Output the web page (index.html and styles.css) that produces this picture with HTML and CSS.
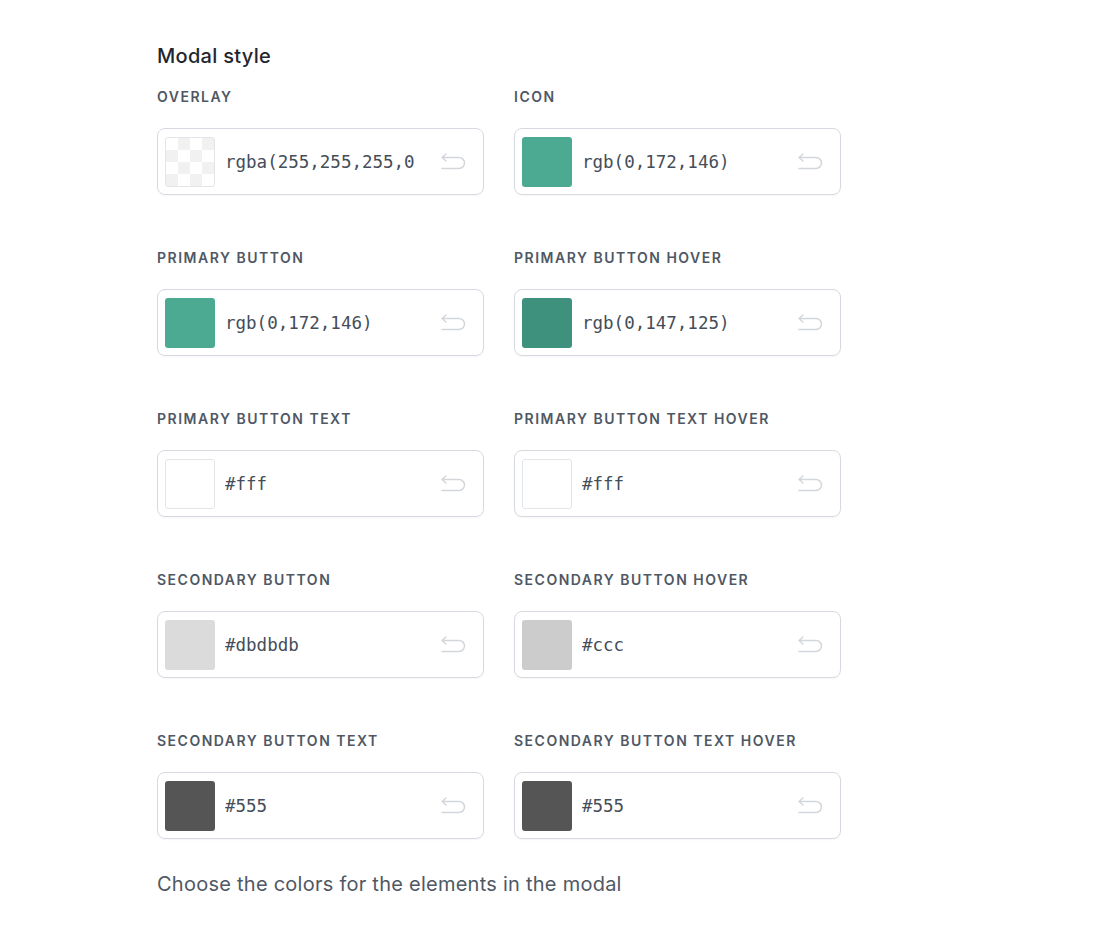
FILE: index.html
```html
<!DOCTYPE html>
<html lang="en">
<head>
    <meta charset="UTF-8">
    <title>Modal style</title>
    <link rel="stylesheet" href="styles.css">
</head>
<body>

<div class="settings">
    <h2 class="title">Modal style</h2>

    <div class="grid">
        <div class="field">
            <label>Overlay</label>
            <div class="picker">
                <span class="swatch checker"></span>
                <input type="text" value="rgba(255,255,255,0.9)">
                <svg class="undo" viewBox="0 0 26 20"><path d="M6 2 L2 5.5 L6 9 M2 5.5 H19 a5.5 5.5 0 0 1 0 11 H2"/></svg>
            </div>
        </div>
        <div class="field">
            <label>Icon</label>
            <div class="picker">
                <span class="swatch" style="background:#4caa93"></span>
                <input type="text" value="rgb(0,172,146)">
                <svg class="undo" viewBox="0 0 26 20"><path d="M6 2 L2 5.5 L6 9 M2 5.5 H19 a5.5 5.5 0 0 1 0 11 H2"/></svg>
            </div>
        </div>

        <div class="field">
            <label>Primary button</label>
            <div class="picker">
                <span class="swatch" style="background:#4caa93"></span>
                <input type="text" value="rgb(0,172,146)">
                <svg class="undo" viewBox="0 0 26 20"><path d="M6 2 L2 5.5 L6 9 M2 5.5 H19 a5.5 5.5 0 0 1 0 11 H2"/></svg>
            </div>
        </div>
        <div class="field">
            <label>Primary button hover</label>
            <div class="picker">
                <span class="swatch" style="background:#3e917d"></span>
                <input type="text" value="rgb(0,147,125)">
                <svg class="undo" viewBox="0 0 26 20"><path d="M6 2 L2 5.5 L6 9 M2 5.5 H19 a5.5 5.5 0 0 1 0 11 H2"/></svg>
            </div>
        </div>

        <div class="field">
            <label>Primary button text</label>
            <div class="picker">
                <span class="swatch light" style="background:#fff"></span>
                <input type="text" value="#fff">
                <svg class="undo" viewBox="0 0 26 20"><path d="M6 2 L2 5.5 L6 9 M2 5.5 H19 a5.5 5.5 0 0 1 0 11 H2"/></svg>
            </div>
        </div>
        <div class="field">
            <label>Primary button text hover</label>
            <div class="picker">
                <span class="swatch light" style="background:#fff"></span>
                <input type="text" value="#fff">
                <svg class="undo" viewBox="0 0 26 20"><path d="M6 2 L2 5.5 L6 9 M2 5.5 H19 a5.5 5.5 0 0 1 0 11 H2"/></svg>
            </div>
        </div>

        <div class="field">
            <label>Secondary button</label>
            <div class="picker">
                <span class="swatch" style="background:#dbdbdb"></span>
                <input type="text" value="#dbdbdb">
                <svg class="undo" viewBox="0 0 26 20"><path d="M6 2 L2 5.5 L6 9 M2 5.5 H19 a5.5 5.5 0 0 1 0 11 H2"/></svg>
            </div>
        </div>
        <div class="field">
            <label>Secondary button hover</label>
            <div class="picker">
                <span class="swatch" style="background:#ccc"></span>
                <input type="text" value="#ccc">
                <svg class="undo" viewBox="0 0 26 20"><path d="M6 2 L2 5.5 L6 9 M2 5.5 H19 a5.5 5.5 0 0 1 0 11 H2"/></svg>
            </div>
        </div>

        <div class="field">
            <label>Secondary button text</label>
            <div class="picker">
                <span class="swatch" style="background:#555"></span>
                <input type="text" value="#555">
                <svg class="undo" viewBox="0 0 26 20"><path d="M6 2 L2 5.5 L6 9 M2 5.5 H19 a5.5 5.5 0 0 1 0 11 H2"/></svg>
            </div>
        </div>
        <div class="field">
            <label>Secondary button text hover</label>
            <div class="picker">
                <span class="swatch" style="background:#555"></span>
                <input type="text" value="#555">
                <svg class="undo" viewBox="0 0 26 20"><path d="M6 2 L2 5.5 L6 9 M2 5.5 H19 a5.5 5.5 0 0 1 0 11 H2"/></svg>
            </div>
        </div>
    </div>

    <p class="help">Choose the colors for the elements in the modal</p>
</div>

</body>
</html>
```

FILE: styles.css
```css
body {
    margin: 0;
    background: #fff;
    font-family: Inter, "Noto Sans", sans-serif;
    color: #1f2933;
}
.settings {
    padding: 42px 0 0 157px;
}
.title {
    margin: 0 0 17px;
    font-size: 20px;
    font-weight: 500;
    line-height: 28px;
    letter-spacing: 0.3px;
    color: #1f2630;
}
.grid {
    display: grid;
    grid-template-columns: 327px 327px;
    column-gap: 30px;
    row-gap: 53px;
}
.field label {
    display: block;
    margin-bottom: 21px;
    font-size: 14px;
    font-weight: 600;
    line-height: 20px;
    letter-spacing: 1.5px;
    text-transform: uppercase;
    color: #4f5864;
}
.picker {
    display: flex;
    align-items: center;
    box-sizing: border-box;
    height: 67px;
    padding: 0 17px 0 7px;
    border: 1px solid #d6dae0;
    border-radius: 8px;
    box-shadow: 0 1px 2px rgba(0, 0, 0, 0.04);
}
.swatch {
    flex: none;
    width: 50px;
    height: 50px;
    border-radius: 3px;
}
.swatch.light {
    box-sizing: border-box;
    border: 1px solid #e2e6ea;
}
.checker {
    box-sizing: border-box;
    border: 1px solid #e2e6ea;
    background-color: #fff;
    background-image:
        linear-gradient(45deg, #f1f1f1 25%, transparent 25%, transparent 75%, #f1f1f1 75%),
        linear-gradient(45deg, #f1f1f1 25%, transparent 25%, transparent 75%, #f1f1f1 75%);
    background-size: 24px 24px;
    background-position: 0 0, 12px 12px;
}
.picker input {
    flex: 1;
    min-width: 0;
    margin: 0 24px 0 10px;
    padding: 0;
    border: 0;
    outline: none;
    background: transparent;
    font-family: "DejaVu Sans Mono", "Liberation Mono", monospace;
    font-size: 17.5px;
    color: #454d58;
}
.undo {
    flex: none;
    width: 26px;
    height: 20px;
    fill: none;
    stroke: #d3d7dc;
    stroke-width: 1.5;
    stroke-linecap: round;
    stroke-linejoin: round;
}
.help {
    margin: 31px 0 0;
    font-size: 20px;
    line-height: 28px;
    letter-spacing: 0.25px;
    color: #4f5864;
}
```
